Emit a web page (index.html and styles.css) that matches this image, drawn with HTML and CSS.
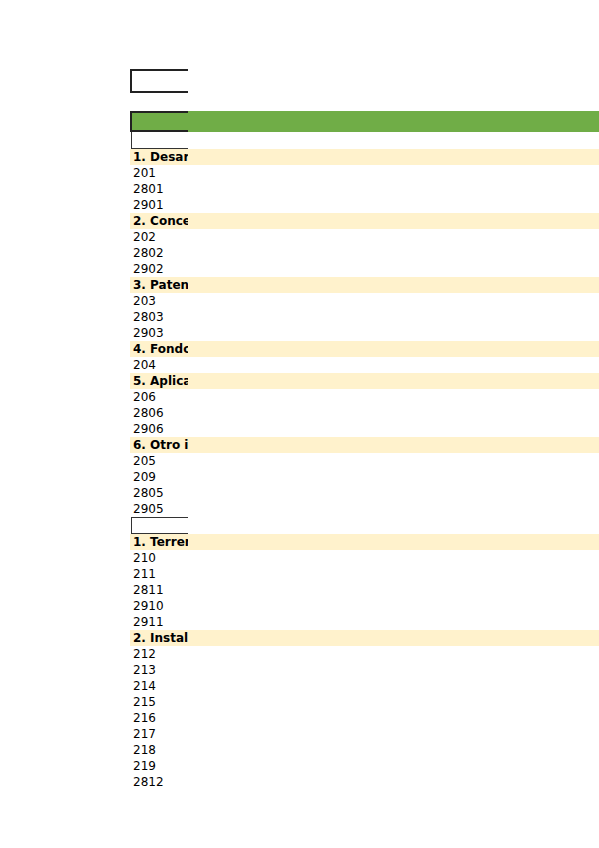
FILE: index.html
```html
<!DOCTYPE html>
<html lang="es">
<head>
<meta charset="utf-8">
<title>Hoja</title>
<link rel="stylesheet" href="styles.css">
</head>
<body>
<div class="sheet">
  <div class="row box-top"><div class="c1 thick"></div><div class="c2"></div></div>
  <div class="row box-green"><div class="c1 thick"></div><div class="c2"></div></div>
  <div class="row empty-after"><div class="c1 thin-lb"></div><div class="c2"></div></div>

  <div class="row head"><div class="c1">1. Desarrollo</div><div class="c2"></div></div>
  <div class="row"><div class="c1">201</div><div class="c2"></div></div>
  <div class="row"><div class="c1">2801</div><div class="c2"></div></div>
  <div class="row"><div class="c1">2901</div><div class="c2"></div></div>
  <div class="row head"><div class="c1">2. Concesiones</div><div class="c2"></div></div>
  <div class="row"><div class="c1">202</div><div class="c2"></div></div>
  <div class="row"><div class="c1">2802</div><div class="c2"></div></div>
  <div class="row"><div class="c1">2902</div><div class="c2"></div></div>
  <div class="row head"><div class="c1">3. Patentes</div><div class="c2"></div></div>
  <div class="row"><div class="c1">203</div><div class="c2"></div></div>
  <div class="row"><div class="c1">2803</div><div class="c2"></div></div>
  <div class="row"><div class="c1">2903</div><div class="c2"></div></div>
  <div class="row head"><div class="c1">4. Fondo de comercio</div><div class="c2"></div></div>
  <div class="row"><div class="c1">204</div><div class="c2"></div></div>
  <div class="row head"><div class="c1">5. Aplicaciones informáticas</div><div class="c2"></div></div>
  <div class="row"><div class="c1">206</div><div class="c2"></div></div>
  <div class="row"><div class="c1">2806</div><div class="c2"></div></div>
  <div class="row"><div class="c1">2906</div><div class="c2"></div></div>
  <div class="row head"><div class="c1">6. Otro inmovilizado intangible</div><div class="c2"></div></div>
  <div class="row"><div class="c1">205</div><div class="c2"></div></div>
  <div class="row"><div class="c1">209</div><div class="c2"></div></div>
  <div class="row"><div class="c1">2805</div><div class="c2"></div></div>
  <div class="row"><div class="c1">2905</div><div class="c2"></div></div>

  <div class="row empty-box"><div class="c1 thin-box"></div><div class="c2"></div></div>

  <div class="row head"><div class="c1">1. Terrenos y construcciones</div><div class="c2"></div></div>
  <div class="row"><div class="c1">210</div><div class="c2"></div></div>
  <div class="row"><div class="c1">211</div><div class="c2"></div></div>
  <div class="row"><div class="c1">2811</div><div class="c2"></div></div>
  <div class="row"><div class="c1">2910</div><div class="c2"></div></div>
  <div class="row"><div class="c1">2911</div><div class="c2"></div></div>
  <div class="row head"><div class="c1">2. Instalaciones técnicas</div><div class="c2"></div></div>
  <div class="row"><div class="c1">212</div><div class="c2"></div></div>
  <div class="row"><div class="c1">213</div><div class="c2"></div></div>
  <div class="row"><div class="c1">214</div><div class="c2"></div></div>
  <div class="row"><div class="c1">215</div><div class="c2"></div></div>
  <div class="row"><div class="c1">216</div><div class="c2"></div></div>
  <div class="row"><div class="c1">217</div><div class="c2"></div></div>
  <div class="row"><div class="c1">218</div><div class="c2"></div></div>
  <div class="row"><div class="c1">219</div><div class="c2"></div></div>
  <div class="row"><div class="c1">2812</div><div class="c2"></div></div>
</div>
</body>
</html>
```
FILE: styles.css
```css
html, body {
  margin: 0;
  padding: 0;
  background: #ffffff;
  overflow: hidden;
}
body {
  font-family: "DejaVu Sans", sans-serif;
  font-size: 12px;
  color: #000000;
}
.sheet {
  display: flex;
  flex-direction: column;
  margin-left: 130px;
  width: 469px;
  padding-top: 69px;
}
.row {
  display: flex;
  height: 16px;
  line-height: 16px;
}
.c1 {
  box-sizing: border-box;
  width: 58px;
  flex: none;
  padding-left: 3px;
  white-space: nowrap;
  overflow: hidden;
}
.c2 {
  flex: 1;
}
.head {
  background: #fff2cc;
  font-weight: bold;
}
.box-top {
  height: 24px;
  margin-bottom: 18px;
}
.thick {
  border-top: 2px solid #222222;
  border-bottom: 2px solid #222222;
  border-left: 2px solid #222222;
}
.box-green {
  height: 21px;
  background: #70ad47;
}
.empty-after {
  height: 17px;
}
.thin-lb {
  margin-left: 1px;
  width: 57px;
  border-left: 1px solid #333333;
  border-bottom: 1px solid #333333;
}
.empty-box {
  height: 17px;
}
.thin-box {
  margin-left: 1px;
  width: 57px;
  border-top: 1px solid #333333;
  border-left: 1px solid #333333;
  border-bottom: 1px solid #333333;
}
```
